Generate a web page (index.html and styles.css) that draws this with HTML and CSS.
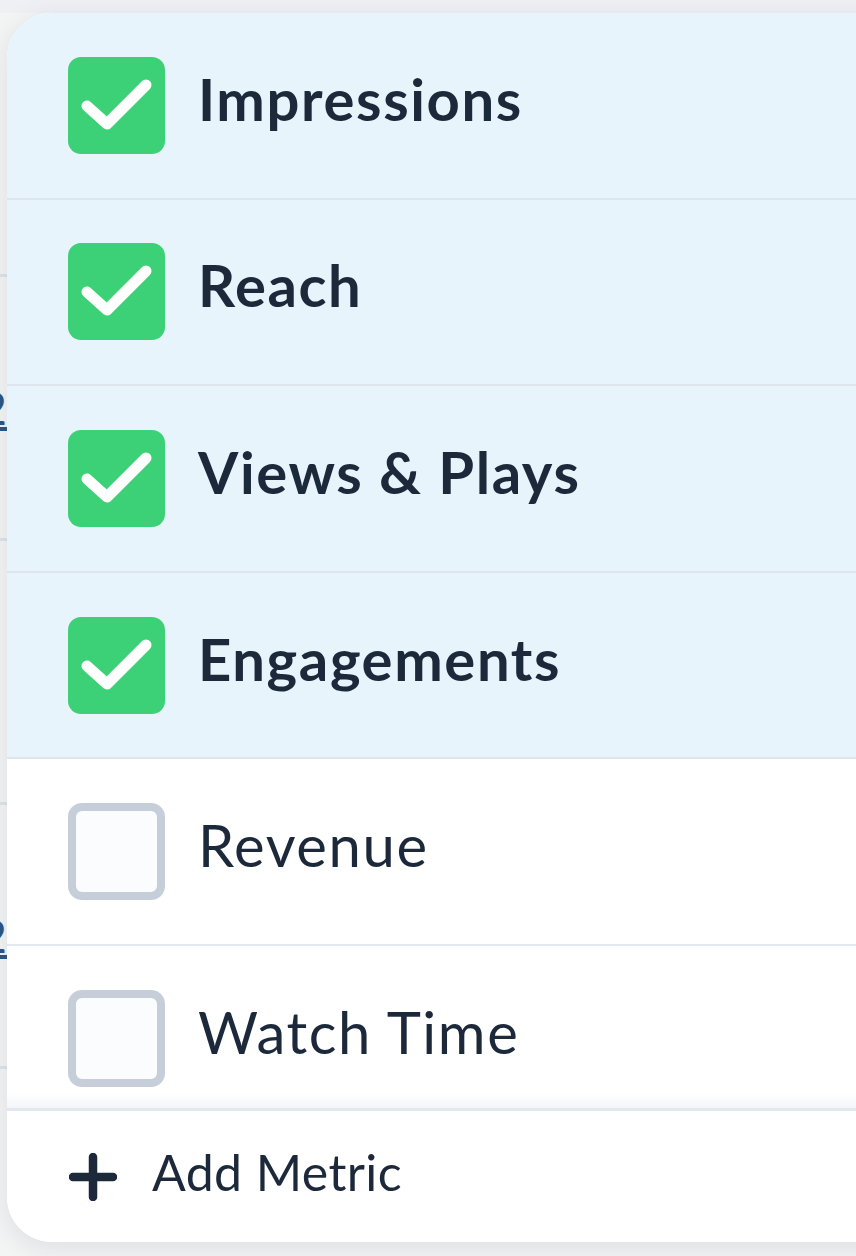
FILE: index.html
```html
<!DOCTYPE html>
<html lang="en">
<head>
    <meta charset="UTF-8">
    <meta name="viewport" content="width=device-width, initial-scale=1.0">
    <title>Metrics</title>
    <link rel="stylesheet" href="styles.css">
</head>
<body>
    <!-- report table sitting underneath the menu -->
    <div class="page">
        <div class="topbar"></div>
        <div class="table">
            <div class="trow"></div>
            <div class="trow"><div class="cell"><a class="num" href="#">12</a></div></div>
            <div class="trow"></div>
            <div class="trow"><div class="cell"><a class="num" href="#">32</a></div></div>
        </div>
    </div>

    <div class="metric-menu">
        <div class="metric-list">
            <label class="metric checked">
                <span class="box">
                    <svg viewBox="0 0 97 97"><path d="M19 49 L39 67 L78 28"/></svg>
                </span>
                <span class="label">Impressions</span>
            </label>
            <label class="metric checked">
                <span class="box">
                    <svg viewBox="0 0 97 97"><path d="M19 49 L39 67 L78 28"/></svg>
                </span>
                <span class="label">Reach</span>
            </label>
            <label class="metric checked">
                <span class="box">
                    <svg viewBox="0 0 97 97"><path d="M19 49 L39 67 L78 28"/></svg>
                </span>
                <span class="label">Views &amp; Plays</span>
            </label>
            <label class="metric checked">
                <span class="box">
                    <svg viewBox="0 0 97 97"><path d="M19 49 L39 67 L78 28"/></svg>
                </span>
                <span class="label">Engagements</span>
            </label>
            <label class="metric">
                <span class="box"></span>
                <span class="label">Revenue</span>
            </label>
            <label class="metric">
                <span class="box"></span>
                <span class="label">Watch Time</span>
            </label>
        </div>
        <button class="add-metric">
            <svg viewBox="0 0 48 48"><path d="M24 4 V44 M4 24 H44"/></svg>
            <span>Add Metric</span>
        </button>
    </div>
</body>
</html>
```

FILE: styles.css
```css
body {
    margin: 0;
    background-color: #f3f4f4;
    font-family: Lato, "Noto Sans", sans-serif;
    color: #1c293a;
    overflow: hidden;
}
.page {
    height: 1256px;
}
.topbar {
    height: 13px;
    background-color: #eef0f4;
}
.trow {
    height: 261px;
    border-bottom: 3px solid #dde3ea;
    display: flex;
    align-items: center;
}
.cell {
    width: 7px;
    overflow: hidden;
    display: flex;
    justify-content: flex-end;
}
.num {
    font-size: 46px;
    color: #2f5683;
    text-decoration: underline;
    text-decoration-thickness: 4px;
    white-space: nowrap;
}

/* dropdown */
.metric-menu {
    position: absolute;
    left: 7px;
    top: 13px;
    width: 920px;
    background-color: #fff;
    border-radius: 45px;
    overflow: hidden;
    box-shadow: 0 6px 26px rgba(20, 35, 55, 0.10);
}
.metric-list {
    height: 1095px;
    overflow: hidden;
    position: relative;
}
.metric-list::after {
    content: "";
    position: absolute;
    left: 0;
    right: 0;
    bottom: 0;
    height: 14px;
    background: linear-gradient(rgba(230, 234, 240, 0), rgba(230, 234, 240, 0.5));
}
.metric {
    display: flex;
    align-items: center;
    gap: 33px;
    height: 186.6px;
    box-sizing: border-box;
    padding-left: 61px;
    border-bottom: 2.6px solid #e1e8ef;
    font-size: 58px;
    cursor: pointer;
}
.metric.checked {
    background-color: #e8f4fc;
    border-bottom-color: #dde5ed;
    font-weight: bold;
}
.label {
    margin-bottom: 14px;
    letter-spacing: 1.6px;
}
.box {
    flex: none;
    width: 97px;
    height: 97px;
    box-sizing: border-box;
    border: 8px solid #c6cfd9;
    border-radius: 14px;
    background-color: #fafcfd;
}
.checked .box {
    border: none;
    background-color: #3cd176;
    border-radius: 13px;
}
.box svg {
    display: block;
    width: 97px;
    height: 97px;
    fill: none;
    stroke: #fff;
    stroke-width: 11;
    stroke-linecap: round;
    stroke-linejoin: round;
}
.add-metric {
    display: flex;
    align-items: center;
    gap: 35px;
    width: 100%;
    height: 134px;
    padding: 0 0 0 62px;
    border: none;
    border-top: 3px solid #e1e8ef;
    background-color: #fff;
    font-family: inherit;
    font-size: 50px;
    color: #1c293a;
    cursor: pointer;
}
.add-metric svg {
    width: 48px;
    height: 48px;
    fill: none;
    stroke: #1c293a;
    stroke-width: 8.5;
    stroke-linecap: round;
}
.add-metric span {
    margin-bottom: 10px;
    letter-spacing: 0.4px;
}
```
